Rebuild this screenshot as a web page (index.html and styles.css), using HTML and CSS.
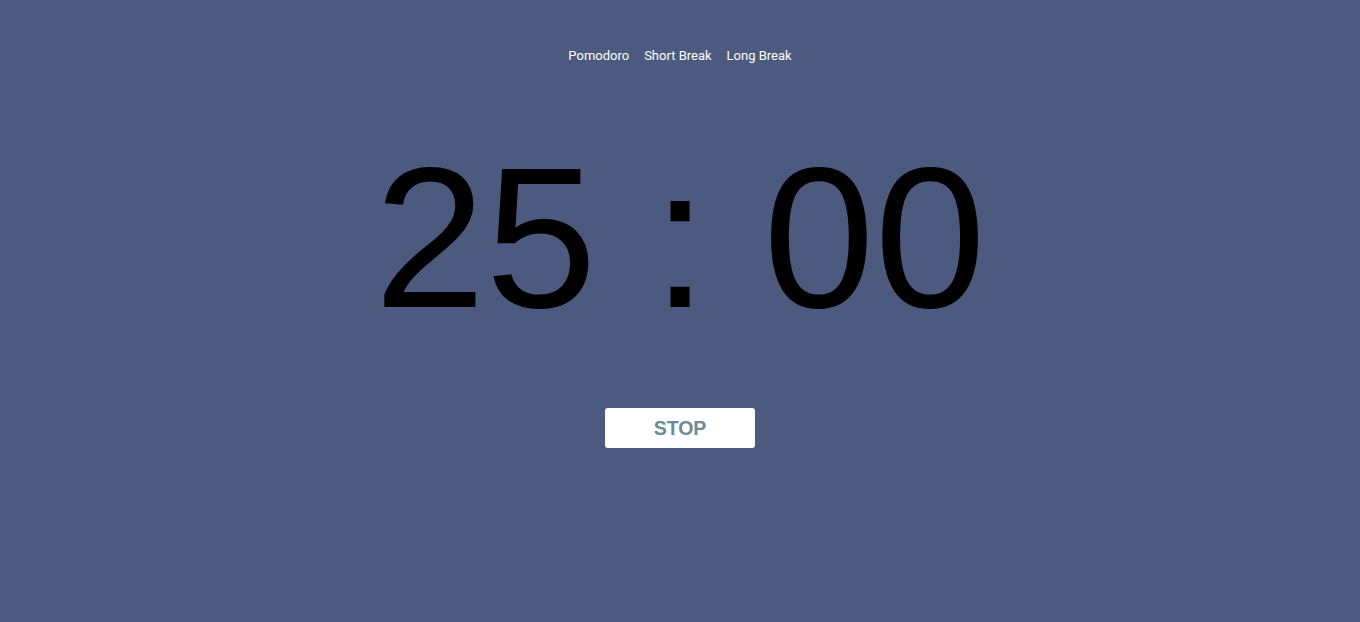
FILE: index.html
```html
<!DOCTYPE html>
<html>
<head>
<meta charset="utf-8">
<title>Pomodoro</title>
<link rel="stylesheet" href="styles.css">
</head>
<body>
<main class="app">
  <nav class="modes">
    <button class="mode">Pomodoro</button>
    <button class="mode">Short Break</button>
    <button class="mode">Long Break</button>
  </nav>
  <div class="timer">25 : 00</div>
  <button class="control">STOP</button>
</main>
</body>
</html>
```
FILE: styles.css
```css
html, body {
  margin: 0;
  padding: 0;
  height: 100%;
}
body {
  background: #4b5a7e;
}
.app {
  display: flex;
  flex-direction: column;
  align-items: center;
  padding-top: 47px;
}
.modes {
  display: flex;
  gap: 15px;
}
.mode {
  background: none;
  border: none;
  padding: 0;
  color: #ffffff;
  font-family: Roboto, "Liberation Sans", sans-serif;
  font-size: 13px;
  line-height: 18px;
  cursor: pointer;
}
.timer {
  margin-top: 58px;
  font-family: "Liberation Sans", Arial, sans-serif;
  font-size: 200px;
  line-height: 230px;
  color: #000;
}
.control {
  margin-top: 55px;
  width: 150px;
  height: 40px;
  background: #ffffff;
  border: none;
  border-radius: 3px;
  color: #6a8a96;
  font-family: "Liberation Sans", Arial, sans-serif;
  font-weight: bold;
  font-size: 19.5px;
  cursor: pointer;
}
```
